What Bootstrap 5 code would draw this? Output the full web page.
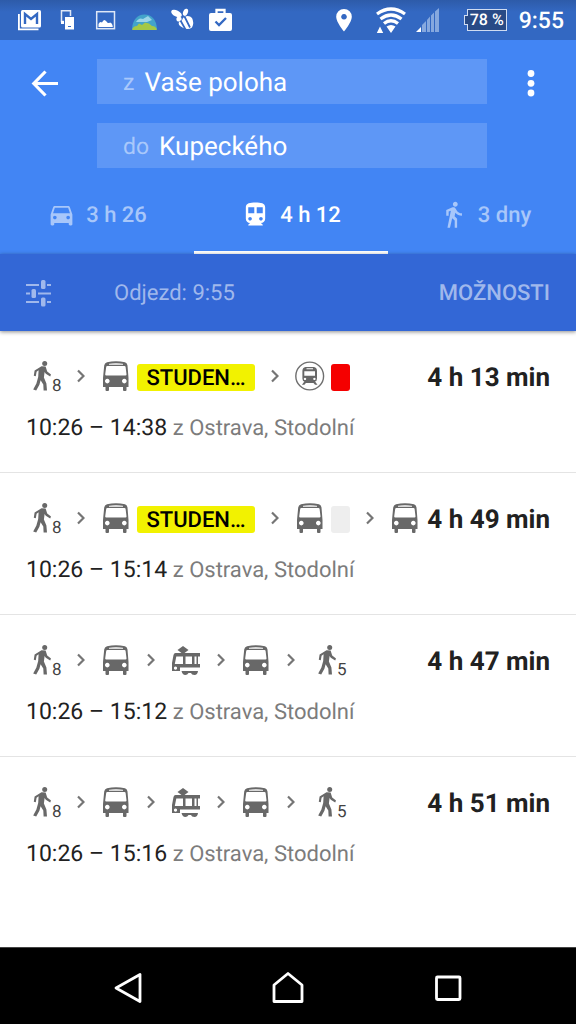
<!DOCTYPE html>
<html lang="cs">
<head>
<meta charset="utf-8">
<meta name="viewport" content="width=device-width, initial-scale=1">
<title>Vaše poloha – Kupeckého</title>
<link rel="stylesheet" href="https://cdn.jsdelivr.net/npm/bootstrap@5.3.0/dist/css/bootstrap.min.css">
<style>
  body { font-family: Roboto, "Noto Sans", sans-serif; color: #212121; background: #fff; text-rendering: geometricPrecision; }
  button, input { font-family: inherit; text-rendering: inherit; }
  svg { display: block; flex: none; }
  .status-bar { height: 40px; padding: 0 12px 0 10px; color: #fff; background: linear-gradient(#2d5ba9, #3368c2 12px, #3368c2); }
  .status-clock { font-size: 23px; line-height: 38px; padding-top: 2px; font-weight: 500; }
  .battery { position: relative; width: 40px; height: 22px; border: 1px solid #cfdcf2; background: #284a86; font-size: 16px; line-height: 20px; font-weight: 500; text-align: center; white-space: nowrap; }
  .battery::before { content: ""; position: absolute; left: -4px; top: 5px; width: 4px; height: 10px; border: 1px solid #cfdcf2; border-right: 0; background: #284a86; }
  .g-signal { margin-left: 10px; }
  .g-battery { margin-left: 28px; }
  .g-clock { margin-left: 12px; }

  .app-head { background: #4285f4; }
  .search-area { padding: 19px 30px 0; }
  .head-btn { width: 30px; height: 48px; }
  .fields { margin: 0 29px 0 37px; gap: 19px; }
  .field { height: 45px; background: #5e97f6; padding: 3px 26px 0; gap: 10px; font-size: 26px; line-height: 42px; }
  .field label { color: #a9c8fb; font-size: 23px; }
  .field input { width: 100%; min-width: 0; border: 0; padding: 0; background: transparent; color: #fff; outline: 0; }
  .mode { flex: 1 1 0; height: 86px; padding: 10px 0 0; gap: 10px; border: 0; border-bottom: 3px solid transparent; background: none; color: #a8c7fa; font-size: 22px; line-height: 28px; font-weight: 500; }
  .mode span { padding-top: 2px; }
  .mode:last-child { padding-right: 8px; }
  .mode.active { color: #fff; border-color: #fff; }
  .modes { margin-right: -14px; }
  .options-bar { position: relative; height: 77px; padding: 1px 26px 0; background: #3367d6; box-shadow: 0 1px 4px rgba(0,0,0,.45); }
  .options-bar .btn { --bs-btn-color: #a0b8ec; font-size: 22px; line-height: 28px; border: 0; padding: 2px 0 0; }
  .options-bar .btn-options { font-weight: 500; }
  .options-bar .depart { margin-left: 62px; }

  .result { padding: 30px 26px 28px; border-bottom: 1px solid #e4e4e4; color: #212121; text-decoration: none; display: block; }
  .result:last-child { border-bottom: 0; }
  .result-top { height: 30px; }
  .legs { gap: 16px; color: #686868; min-width: 0; }
  .leg { gap: 6px; }
  .walk { padding-left: 7px; gap: 1px; }
  .walk-min { font-size: 17px; line-height: 10px; width: 9px; color: #424242; }
  .line-tag { height: 27px; min-width: 19px; border-radius: 3px; margin-top: 3px; font-size: 22px; line-height: 29px; font-weight: 500; color: #000; }
  .tag-yellow { background: #f2f200; width: 118px; text-align: center; }
  .tag-red { background: #f50000; }
  .tag-grey { background: #eee; }
  .duration { font-size: 26px; line-height: 30px; font-weight: 700; padding-top: 2px; }
  .result-when { margin-top: 21px; font-size: 23px; line-height: 32px; }
  .origin { color: #7c7c7c; font-size: 22px; line-height: 24px; }
  .sys-nav { height: 77px; padding-top: 3px; background: #000; border-top: 1px solid #444; gap: 128px; }
  .sys-nav .btn { width: 32px; height: 34px; }
</style>
</head>
<body class="d-flex flex-column min-vh-100">

<svg width="0" height="0" class="position-absolute" aria-hidden="true">
  <symbol id="i-walk" viewBox="0 0 18 30">
    <circle cx="11.7" cy="2.6" r="2.5"/>
    <path d="M8.500 5.200 12.600 5.600 14.200 10.600 18 13.600 17.200 15.400 12.800 12.800 11.600 11 10.900 16.400 13.400 22.600 14 29.500H10.600L10.300 23.600 7.600 19.200 6.400 23.800 3.200 29.600.2 28.600 3.400 22.400 5.200 16 5.600 9.200 3.600 10.800 2.800 15.200.8 14.800 1.600 9.400Z"/>
  </symbol>
  <symbol id="i-sep" viewBox="0 0 8 14"><path d="M1 1.500 6.500 7 1 12.500" fill="none" stroke="#757575" stroke-width="2.200"/></symbol>
  <symbol id="i-bus" viewBox="0 0 30 30">
    <path fill-rule="evenodd" d="M2 17 3.200 4.500Q3.500 2.200 6 1.300Q15-.9 24 1.300Q26.300 2.200 26.500 4.500L27.500 17V26H25.500V29Q25.500 30 24.500 30H23Q22 30 22 29V26H8V29Q8 30 7 30H5.500Q4.500 30 4.500 29V26H2ZM6.300 5Q5.300 5 5.200 6L4.200 13.300Q4.100 14.600 5.200 14.600H24.500Q25.600 14.600 25.500 13.300L24.600 6Q24.500 5 23.500 5ZM6.300 17.800A2.300 2.300 0 1 0 6.310 17.800ZM23.300 17.800A2.300 2.300 0 1 0 23.310 17.800Z"/>
    <path fill="#d8d8d8" d="M8 2.700Q15 1.300 22 2.700V4H8Z"/>
  </symbol>
  <symbol id="i-tram" viewBox="0 0 30 30">
    <path fill-rule="evenodd" d="M12 1 17.500 5 13.500 8H29V11.500H27V19H29V22.500H9V26H1V18L2.500 10Q3 8 4.500 8H10.500L6.500 5ZM5.300 11.500 3.800 19H12V11.500ZM14.500 11.500V19H21V11.500ZM23.500 11.500V19H25.500V11.500ZM4.500 21.500A1.600 1.600 0 1 0 4.510 21.500Z"/>
    <path d="M10.500 26H27Q26.500 30 23.500 30T20 28H17.500Q16.500 30 14.300 30 11.500 30 10.500 26Z"/>
  </symbol>
  <symbol id="i-train" viewBox="0 0 30 30">
    <circle cx="14.700" cy="15" r="13.900" fill="none" stroke="#6f6f6f" stroke-width="1.400"/>
    <path fill-rule="evenodd" d="M10.500 6H18.900Q22 6.500 22 10V17.500Q22 20 20 20.500L22.500 23.700H20L18.500 22H10.900L9.400 23.700H6.900L9.400 20.500Q7.400 20 7.400 17.500V10Q7.400 6.500 10.500 6ZM11.500 7.300V8.300H18V7.300ZM9.300 10.300V14.800H20V10.300ZM10 16.700A1.200 1.200 0 1 0 10.010 16.700ZM19.400 16.700A1.200 1.200 0 1 0 19.410 16.700Z"/>
  </symbol>
</svg>

<div class="status-bar d-flex align-items-center justify-content-between">
  <div class="d-flex">
    <svg width="38" height="40" viewBox="0 0 38 40"><path d="M8.900 14V29.300H28.500" fill="none" stroke="#fff" stroke-width="1.800"/><rect x="11" y="10" width="20" height="17.500" rx="1.500" fill="#fff"/><path d="M15 24V14L21 19 27 14V24" fill="none" stroke="#3368c2" stroke-width="2.400"/></svg>
    <svg width="38" height="40" viewBox="0 0 38 40"><path d="M16 21.500H13.500V10.800H22.500V16" fill="none" stroke="#dfe8f7" stroke-width="1.500"/><path fill="#fff" d="M17 17H26V29.500H17ZM13 21H16V24H13Z"/><path stroke="#3368c2" d="M20 26.500H23"/></svg>
    <svg width="38" height="40" viewBox="0 0 38 40"><rect x="10.700" y="11.700" width="17.800" height="17" fill="none" stroke="#dfe8f7" stroke-width="1.500"/><path fill="#fff" d="M12.500 27V24Q14 21 16 22.500 18 18 20.500 21.500 22 24 24 22.500 26.500 23 26.800 27Z"/></svg>
    <svg width="38" height="40" viewBox="0 0 38 40"><path fill="#42a3ca" d="M8 29Q9 15 20.500 14.500 32 15 33 29Z"/><path fill="#9bd5e8" d="M12 22Q15 17 19 19L24 16 28 20 23 22Z"/><path fill="#a4c846" d="M8 30Q9 26 13 26L15 23.500 18 25 21 22.500 25 23.500 28 26Q32 26 33 30Z"/></svg>
    <svg width="38" height="40" viewBox="0 0 38 40" fill="#fff"><ellipse cx="14.500" cy="13.500" rx="5.700" ry="3" transform="rotate(25 14.500 13.500)"/><ellipse cx="23.500" cy="12.300" rx="2.400" ry="3.700" transform="rotate(20 23.500 12.300)"/><circle cx="17" cy="19" r="2.600"/><path d="M23 16.500Q27.500 15 30 18 32.500 23 30 27.500 25.500 30.500 20.500 27.500 15.500 25 17 22Q20 21.500 21 18Z"/><path d="M18.500 20.500 23.500 29.500M22.500 16.500 28 27.500" fill="none" stroke="#3368c2" stroke-width="1.700"/></svg>
    <svg width="38" height="40" viewBox="0 0 38 40"><rect x="9" y="13" width="23" height="18" rx="2" fill="#fff"/><path d="M16.500 13V10H24.500V13" fill="none" stroke="#fff" stroke-width="2.300"/><path d="M15.500 21.500 19 25 26 18" fill="none" stroke="#3368c2" stroke-width="2.300"/></svg>
  </div>
  <div class="d-flex align-items-center">
    <svg width="16" height="24" viewBox="0 0 16 24"><path fill="#fff" fill-rule="evenodd" d="M8 1A7.800 7.800 0 0 1 15.800 9C15.800 14 8 23.500 8 23.500S.2 14 .2 9A7.800 7.800 0 0 1 8 1ZM8 6A2.800 2.800 0 1 0 8.010 6Z"/></svg>
    <svg class="ms-4" width="30" height="26" viewBox="0 0 30 26"><g fill="none" stroke="#fff" stroke-width="3.300"><path d="M1 7Q15-3 29 7M4.500 12Q15 4 25.500 12M8 16.500Q15 11 22 16.500"/></g><path fill="#fff" d="M10.500 19.500Q15 16.500 19.500 19.500L15 26ZM.8 26 4 19.500 7.200 26Z"/></svg>
    <svg class="g-signal" width="23" height="26" viewBox="0 0 23 26"><path fill="#86a8de" d="M6 18 10 14V25H6ZM11 13 14 9.500V25H11ZM15 8.500 18 5.500V25H15ZM19 4.500 23 1V25H19Z"/><path fill="#fff" d="M0 25 5 20V25Z"/></svg>
    <span class="battery g-battery">78 %</span>
    <span class="status-clock g-clock">9:55</span>
  </div>
</div>

<header class="app-head">
  <form class="search-area d-flex align-items-start" onsubmit="return false">
    <button type="button" class="head-btn btn border-0 p-0" aria-label="Zpět"><svg width="30" height="48" viewBox="0 0 30 48"><path d="M28 24.500H4M15.500 12.500 3.800 24.500 15.500 36.500" fill="none" stroke="#fff" stroke-width="3.200"/></svg></button>
    <div class="fields d-flex flex-column flex-grow-1">
      <div class="field d-flex"><label for="from">z</label><input id="from" type="text" value="Vaše poloha"></div>
      <div class="field d-flex"><label for="to">do</label><input id="to" type="text" value="Kupeckého"></div>
    </div>
    <button type="button" class="head-btn btn border-0 p-0" aria-label="Další možnosti"><svg width="30" height="48" viewBox="0 0 30 48" fill="#fff"><circle cx="15" cy="14.500" r="3.400"/><circle cx="15" cy="24.300" r="3.400"/><circle cx="15" cy="34" r="3.400"/></svg></button>
  </form>
  <div class="overflow-hidden">
  <nav class="modes d-flex" aria-label="Způsob dopravy">
    <button type="button" class="mode d-flex align-items-center justify-content-center"><svg width="29" height="29" viewBox="0 0 24 24" fill="currentColor"><path d="M18.920 6.010C18.720 5.420 18.160 5 17.500 5h-11c-.66 0-1.210.42-1.420 1.010L3 12v8c0 .55.45 1 1 1h1c.55 0 1-.45 1-1v-1h12v1c0 .55.45 1 1 1h1c.55 0 1-.45 1-1v-8l-2.080-5.990zM6.500 16c-.83 0-1.500-.67-1.500-1.500S5.670 13 6.500 13s1.500.67 1.500 1.500S7.330 16 6.500 16zm11 0c-.83 0-1.500-.67-1.500-1.500s.67-1.500 1.500-1.500 1.500.67 1.500 1.500-.67 1.500-1.500 1.500zM5 11l1.500-4.500h11L19 11H5z"/></svg><span>3 h 26</span></button>
    <button type="button" class="mode active d-flex align-items-center justify-content-center" aria-current="true"><svg width="29" height="29" viewBox="0 0 24 24" fill="currentColor"><path d="M12 2c-4.420 0-8 .5-8 4v9.500C4 17.430 5.570 19 7.500 19L6 20.500v.5h12v-.5L16.500 19c1.930 0 3.500-1.570 3.500-3.500V6c0-3.500-3.580-4-8-4zM7.500 17c-.83 0-1.500-.67-1.500-1.500S6.670 14 7.500 14s1.500.67 1.500 1.500S8.330 17 7.500 17zm3.500-6H6V6h5v5zm5.500 6c-.83 0-1.500-.67-1.500-1.500s.67-1.500 1.500-1.500 1.500.67 1.500 1.500-.67 1.500-1.500 1.500zm1.500-6h-5V6h5v5z"/></svg><span>4 h 12</span></button>
    <button type="button" class="mode d-flex align-items-center justify-content-center"><svg width="29" height="29" viewBox="0 0 24 24" fill="currentColor"><path d="M13.500 5.500c1.100 0 2-.9 2-2s-.9-2-2-2-2 .9-2 2 .9 2 2 2zM9.800 8.900L7 23h2.100l1.800-8 2.100 2v6h2v-7.500l-2.100-2 .6-3C14.800 12 16.800 13 19 13v-2c-1.900 0-3.500-1-4.300-2.400l-1-1.600c-.4-.6-1-1-1.700-1-.3 0-.5.1-.8.1L6 8.300V13h2V9.600l1.800-.7"/></svg><span>3 dny</span></button>
  </nav>
  </div>
  <div class="options-bar d-flex align-items-center">
    <svg width="26" height="28" viewBox="0 0 26 28" fill="#a0b8ec"><path d="M0 5H13V7H0ZM21 5H25V7H21ZM0 13.500H4V15.500H0ZM12 13.500H25V15.500H12ZM0 22H13V24H0ZM21 22H25V24H21Z"/><rect x="15" y="1" width="4.500" height="9" rx="1.500"/><rect x="5.500" y="10" width="4.500" height="9" rx="1.500"/><rect x="15" y="18.500" width="4.500" height="9" rx="1.500"/></svg>
    <button type="button" class="btn depart">Odjezd: 9:55</button>
    <button type="button" class="btn btn-options ms-auto">MOŽNOSTI</button>
  </div>
</header>

<main class="flex-grow-1">
  <a href="#" class="result">
    <div class="result-top d-flex justify-content-between">
      <div class="legs d-flex align-items-center">
        <span class="walk d-flex align-items-end"><svg width="18" height="30" fill="currentColor"><use href="#i-walk"/></svg><span class="walk-min">8</span></span>
        <svg width="8" height="14"><use href="#i-sep"/></svg>
        <span class="leg d-flex align-items-center"><svg width="30" height="30" fill="currentColor"><use href="#i-bus"/></svg><span class="line-tag tag-yellow">STUDEN…</span></span>
        <svg width="8" height="14"><use href="#i-sep"/></svg>
        <span class="leg d-flex align-items-center"><svg width="30" height="30" fill="currentColor"><use href="#i-train"/></svg><span class="line-tag tag-red"></span></span>
      </div>
      <span class="duration text-nowrap">4 h 13 min</span>
    </div>
    <div class="result-when">10:26 – 14:38 <span class="origin">z Ostrava, Stodolní</span></div>
  </a>
  <a href="#" class="result">
    <div class="result-top d-flex justify-content-between">
      <div class="legs d-flex align-items-center">
        <span class="walk d-flex align-items-end"><svg width="18" height="30" fill="currentColor"><use href="#i-walk"/></svg><span class="walk-min">8</span></span>
        <svg width="8" height="14"><use href="#i-sep"/></svg>
        <span class="leg d-flex align-items-center"><svg width="30" height="30" fill="currentColor"><use href="#i-bus"/></svg><span class="line-tag tag-yellow">STUDEN…</span></span>
        <svg width="8" height="14"><use href="#i-sep"/></svg>
        <span class="leg d-flex align-items-center"><svg width="30" height="30" fill="currentColor"><use href="#i-bus"/></svg><span class="line-tag tag-grey"></span></span>
        <svg width="8" height="14"><use href="#i-sep"/></svg>
        <svg width="30" height="30" fill="currentColor"><use href="#i-bus"/></svg>
      </div>
      <span class="duration text-nowrap">4 h 49 min</span>
    </div>
    <div class="result-when">10:26 – 15:14 <span class="origin">z Ostrava, Stodolní</span></div>
  </a>
  <a href="#" class="result">
    <div class="result-top d-flex justify-content-between">
      <div class="legs d-flex align-items-center">
        <span class="walk d-flex align-items-end"><svg width="18" height="30" fill="currentColor"><use href="#i-walk"/></svg><span class="walk-min">8</span></span>
        <svg width="8" height="14"><use href="#i-sep"/></svg>
        <svg width="30" height="30" fill="currentColor"><use href="#i-bus"/></svg>
        <svg width="8" height="14"><use href="#i-sep"/></svg>
        <svg width="30" height="30" fill="currentColor"><use href="#i-tram"/></svg>
        <svg width="8" height="14"><use href="#i-sep"/></svg>
        <svg width="30" height="30" fill="currentColor"><use href="#i-bus"/></svg>
        <svg width="8" height="14"><use href="#i-sep"/></svg>
        <span class="walk d-flex align-items-end"><svg width="18" height="30" fill="currentColor"><use href="#i-walk"/></svg><span class="walk-min">5</span></span>
      </div>
      <span class="duration text-nowrap">4 h 47 min</span>
    </div>
    <div class="result-when">10:26 – 15:12 <span class="origin">z Ostrava, Stodolní</span></div>
  </a>
  <a href="#" class="result">
    <div class="result-top d-flex justify-content-between">
      <div class="legs d-flex align-items-center">
        <span class="walk d-flex align-items-end"><svg width="18" height="30" fill="currentColor"><use href="#i-walk"/></svg><span class="walk-min">8</span></span>
        <svg width="8" height="14"><use href="#i-sep"/></svg>
        <svg width="30" height="30" fill="currentColor"><use href="#i-bus"/></svg>
        <svg width="8" height="14"><use href="#i-sep"/></svg>
        <svg width="30" height="30" fill="currentColor"><use href="#i-tram"/></svg>
        <svg width="8" height="14"><use href="#i-sep"/></svg>
        <svg width="30" height="30" fill="currentColor"><use href="#i-bus"/></svg>
        <svg width="8" height="14"><use href="#i-sep"/></svg>
        <span class="walk d-flex align-items-end"><svg width="18" height="30" fill="currentColor"><use href="#i-walk"/></svg><span class="walk-min">5</span></span>
      </div>
      <span class="duration text-nowrap">4 h 51 min</span>
    </div>
    <div class="result-when">10:26 – 15:16 <span class="origin">z Ostrava, Stodolní</span></div>
  </a>
</main>

<nav class="sys-nav d-flex align-items-center justify-content-center" aria-label="Systém">
  <button type="button" class="btn border-0 p-0" aria-label="Zpět"><svg width="32" height="34" viewBox="0 0 32 34"><path d="M28 3.500V30.500L4 17Z" fill="none" stroke="#fff" stroke-width="2.800" stroke-linejoin="round"/></svg></button>
  <button type="button" class="btn border-0 p-0" aria-label="Domů"><svg width="32" height="34" viewBox="0 0 32 34"><path d="M2 30.500V14L16 2.500 30 14V30.500Z" fill="none" stroke="#fff" stroke-width="2.800" stroke-linejoin="round"/></svg></button>
  <button type="button" class="btn border-0 p-0" aria-label="Přehled"><svg width="32" height="34" viewBox="0 0 32 34"><rect x="4.500" y="6" width="23.500" height="22.500" rx="1" fill="none" stroke="#fff" stroke-width="2.800"/></svg></button>
</nav>

<script src="https://cdn.jsdelivr.net/npm/bootstrap@5.3.0/dist/js/bootstrap.bundle.min.js"></script>
</body>
</html>
